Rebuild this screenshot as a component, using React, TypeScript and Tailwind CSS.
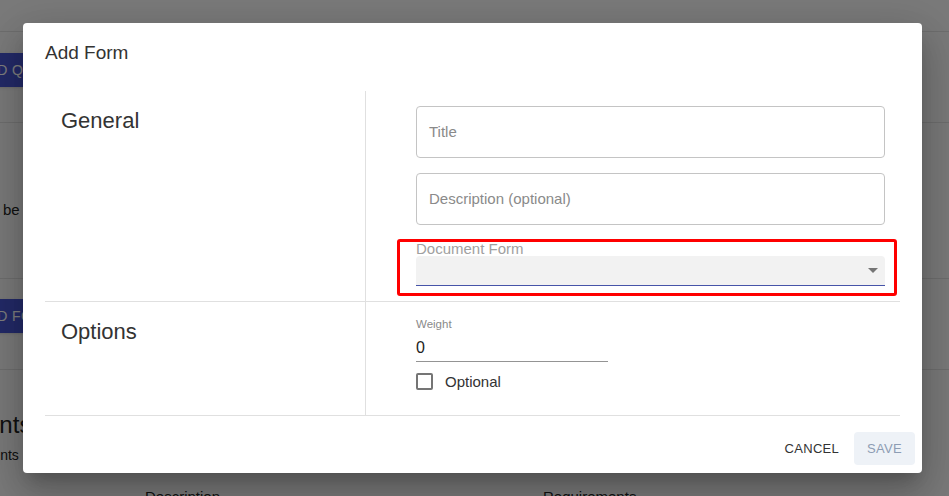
import * as React from "react";

const font = "font-['Liberation_Sans',Arial,sans-serif]";

function BackgroundPage() {
    return (
        <div className="-ml-[100px] flex w-[1149px] flex-col text-[#222]">
            <div className="h-[32px] border-b border-[#dcdcdc]" />
            <div className="h-[91px] border-b border-[#dcdcdc] pt-[21px]">
                <button className="ml-[61px] h-[34px] rounded bg-[#4654d0] px-[16px] text-[14px] tracking-[0.4px] text-white shadow">
                    ADD QUESTION
                </button>
            </div>
            <div className="h-[156px] border-b border-[#dcdcdc] pt-[78px]">
                <p className="ml-[78px] text-[15px] leading-[18px]">will be shown to the applicant when filling in the form.</p>
            </div>
            <div className="h-[91px] border-b border-[#dcdcdc] pt-[20px]">
                <button className="ml-[61px] h-[34px] rounded bg-[#4654d0] px-[16px] text-[14px] tracking-[0.4px] text-white shadow">
                    ADD FORM
                </button>
            </div>
            <div className="pt-[41px]">
                <h3 className="ml-[10px] text-[24px] leading-[28px]">Documents</h3>
                <p className="ml-[48px] mt-[6px] text-[14px] leading-[20px]">Documents in this section are required.</p>
                <div className="mt-[22px] flex pl-[245px] text-[15px] leading-[20px]">
                    <span className="w-[398px]">Description</span>
                    <span>Requirements</span>
                </div>
            </div>
        </div>
    );
}

function OutlinedField({ placeholder }: { placeholder: string }) {
    return (
        <div className="flex h-[52px] items-center rounded border border-[#c4c4c4] px-[12px] text-[15px] text-[#8a8a8a]">
            {placeholder}
        </div>
    );
}

export default function App() {
    return (
        <div className={`relative h-[496px] w-[949px] overflow-hidden bg-[#f4f4f4] ${font}`}>
            <BackgroundPage />
            <div className="absolute inset-0 bg-black/50" />

            <div className="absolute inset-0 flex items-center pl-[23px]">
                <div className="flex h-[450px] w-[899px] flex-col rounded bg-white shadow-[0_11px_15px_-7px_rgba(0,0,0,0.2),0_24px_38px_3px_rgba(0,0,0,0.14),0_9px_46px_8px_rgba(0,0,0,0.12)]">
                    <h2 className="px-[22px] pt-[18px] text-[19px] leading-[24px] text-[#333]">Add Form</h2>

                    <div className="mx-[22px] mt-[26px]">
                        {/* General */}
                        <div className="grid h-[211px] grid-cols-[320px_1fr] border-b border-[#e0e0e0]">
                            <div className="pl-[16px] pt-[17px] text-[22px] leading-[26px] text-[#333]">General</div>
                            <div className="flex flex-col border-l border-[#e0e0e0] pl-[50px] pr-[15px] pt-[15px]">
                                <OutlinedField placeholder="Title" />
                                <div className="mt-[15px]">
                                    <OutlinedField placeholder="Description (optional)" />
                                </div>
                                <div className="mt-[16px] h-[15px] text-[15px] leading-[15px] text-[#a0a0a0]">Document Form</div>
                                <div className="flex h-[30px] items-center justify-end rounded-t border-b border-[#4654a8] bg-[#f2f2f2] pr-[7px]">
                                    <svg width="10" height="5" viewBox="0 0 10 5">
                                        <polygon points="0,0 10,0 5,5" fill="#757575" />
                                    </svg>
                                </div>
                            </div>
                        </div>

                        {/* Options */}
                        <div className="grid h-[114px] grid-cols-[320px_1fr] border-b border-[#e0e0e0]">
                            <div className="pl-[16px] pt-[17px] text-[22px] leading-[26px] text-[#333]">Options</div>
                            <div className="flex flex-col border-l border-[#e0e0e0] pl-[50px] pt-[16px]">
                                <div className="text-[11.5px] leading-[13px] text-[#8a8a8a]">Weight</div>
                                <div className="mt-[2px] h-[29px] w-[192px] border-b border-[#949494] pt-[5px] text-[16px] leading-[19px] text-[#222]">
                                    0
                                </div>
                                <label className="mt-[11px] flex items-center gap-[12px]">
                                    <span className="h-[17px] w-[17px] rounded-[2px] border-2 border-[#757575]" />
                                    <span className="text-[15px] leading-[17px] text-[#333]">Optional</span>
                                </label>
                            </div>
                        </div>
                    </div>

                    <div className="flex justify-end gap-[2px] pr-[7px] pt-[16px]">
                        <button className="h-[33px] rounded px-[13px] text-[13px] tracking-[0.3px] text-[#333]">CANCEL</button>
                        <button className="h-[33px] rounded bg-[#eef2f7] px-[13px] text-[13px] tracking-[0.3px] text-[#8d9db4]">SAVE</button>
                    </div>
                </div>
            </div>

            {/* annotation */}
            <div className="absolute left-[397px] top-[239px] h-[57px] w-[500px] rounded-[3px] border-[3px] border-[#ff0000]" />
        </div>
    );
}
